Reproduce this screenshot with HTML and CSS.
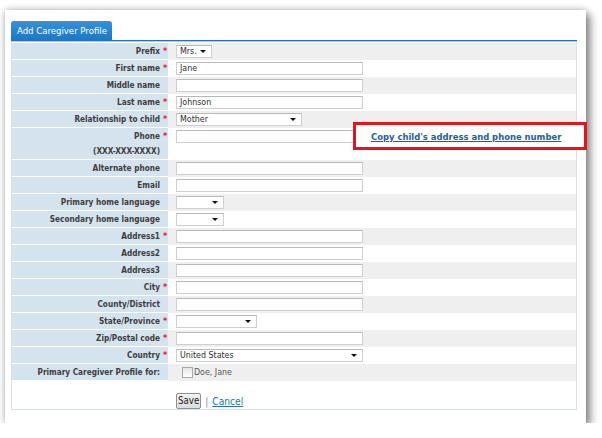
FILE: index.html
```html
<!DOCTYPE html>
<html>
<head>
<meta charset="utf-8">
<link rel="stylesheet" href="styles.css">
</head>
<body>
<div class="page">
  <div class="card">
    <div class="frame">
      <div class="tabs"><div class="tab">Add Caregiver Profile</div></div>
      <div class="tabline"></div>
      <div class="body">
        <div class="form">
          <div class="row"><div class="label">Prefix<span class="req">*</span></div><div class="field"><span class="select w-prefix">Mrs.</span></div></div>
          <div class="row"><div class="label">First name<span class="req">*</span></div><div class="field"><span class="input">Jane</span></div></div>
          <div class="row"><div class="label">Middle name<span class="req"></span></div><div class="field"><span class="input"></span></div></div>
          <div class="row"><div class="label">Last name<span class="req">*</span></div><div class="field"><span class="input">Johnson</span></div></div>
          <div class="row"><div class="label">Relationship to child<span class="req">*</span></div><div class="field"><span class="select w-rel">Mother</span></div></div>
          <div class="row tall"><div class="label"><div class="line">Phone<span class="req">*</span></div><div class="line">(XXX-XXX-XXXX)<span class="req"></span></div></div><div class="field"><span class="input"></span></div></div>
          <div class="row"><div class="label">Alternate phone<span class="req"></span></div><div class="field"><span class="input"></span></div></div>
          <div class="row"><div class="label">Email<span class="req"></span></div><div class="field"><span class="input"></span></div></div>
          <div class="row"><div class="label">Primary home language<span class="req"></span></div><div class="field"><span class="select w-lang"></span></div></div>
          <div class="row"><div class="label">Secondary home language<span class="req"></span></div><div class="field"><span class="select w-lang"></span></div></div>
          <div class="row"><div class="label">Address1<span class="req">*</span></div><div class="field"><span class="input"></span></div></div>
          <div class="row"><div class="label">Address2<span class="req"></span></div><div class="field"><span class="input"></span></div></div>
          <div class="row"><div class="label">Address3<span class="req"></span></div><div class="field"><span class="input"></span></div></div>
          <div class="row"><div class="label">City<span class="req">*</span></div><div class="field"><span class="input"></span></div></div>
          <div class="row"><div class="label">County/District<span class="req"></span></div><div class="field"><span class="input"></span></div></div>
          <div class="row"><div class="label">State/Province<span class="req">*</span></div><div class="field"><span class="select w-state"></span></div></div>
          <div class="row"><div class="label">Zip/Postal code<span class="req">*</span></div><div class="field"><span class="input"></span></div></div>
          <div class="row"><div class="label">Country<span class="req">*</span></div><div class="field"><span class="select w-country">United States</span></div></div>
          <div class="row"><div class="label">Primary Caregiver Profile for:<span class="req"></span></div><div class="field"><label class="check"><span class="box"></span>Doe, Jane</label></div></div>
        </div>
        <div class="actions">
          <span class="btn">Save</span>
          <span class="sep">|</span>
          <a class="cancel" href="#">Cancel</a>
        </div>
      </div>
    </div>
    <div class="callout"><a href="#">Copy child's address and phone number</a></div>
  </div>
</div>
</body>
</html>
```

FILE: styles.css
```css
html, body {
  margin: 0;
  padding: 0;
  background: #ffffff;
}

body {
  font-family: "DejaVu Sans Condensed", "DejaVu Sans", sans-serif;
  color: #3c3c3c;
}

.page {
  padding: 10px 0 0 5px;
}

.card {
  position: relative;
  width: 581px;
  height: 413px;
  background: #ffffff;
  box-shadow: 0 0 7px rgba(0, 0, 0, 0.30), 5px 5px 8px rgba(0, 0, 0, 0.38);
  overflow: visible;
}

.frame {
  margin: 0 9px 0 6px;
  padding-top: 11px;
}

.tabs {
  display: flex;
  height: 19px;
}

.tab {
  width: 101px;
  box-sizing: border-box;
  background: linear-gradient(#3592d8, #1a78c6);
  border-radius: 3px 3px 0 0;
  color: #ffffff;
  font-size: 9.5px;
  line-height: 20px;
  padding-left: 6px;
  white-space: nowrap;
}

.tabline {
  height: 1px;
  background: #2b71b3;
  border-bottom: 1px solid #a8cde9;
}

.body {
  border: 1px solid #d9e3e7;
  border-top: none;
  height: 368px;
  box-sizing: border-box;
  padding-top: 1px;
}

.form {
  display: flex;
  flex-direction: column;
}

.row {
  display: grid;
  grid-template-columns: 156px 1fr;
  height: 17px;
}

.row.tall {
  height: 32px;
}

.row:nth-child(odd) .field {
  background: #efefef;
}

.label {
  background: #d5e3ee;
  border-bottom: 1px solid #ffffff;
  box-sizing: border-box;
  text-align: right;
  font-weight: bold;
  font-size: 8.2px;
  line-height: 16px;
  color: #3d3d3d;
  white-space: nowrap;
}

.row.tall .label {
  padding-top: 1px;
  line-height: 15px;
}

.req {
  display: inline-block;
  width: 8px;
  padding-left: 3px;
  box-sizing: border-box;
  text-align: left;
  color: #e2202c;
  font-size: 9px;
}

.field {
  padding-left: 8px;
  padding-top: 2px;
  box-sizing: border-box;
  font-size: 8.8px;
  color: #2e2e2e;
}

.input,
.select {
  display: block;
  position: relative;
  height: 13px;
  box-sizing: border-box;
  border: 1px solid #cfcfcf;
  border-top-color: #b9b9b9;
  background: #ffffff;
  padding-left: 3px;
  line-height: 11px;
  white-space: nowrap;
}

.input {
  width: 187px;
}

.select::after {
  content: "";
  position: absolute;
  right: 5px;
  top: 4px;
  border-left: 3px solid transparent;
  border-right: 3px solid transparent;
  border-top: 3px solid #111111;
}

.w-prefix { width: 36px; }
.w-rel { width: 126px; }
.w-lang { width: 48px; }
.w-state { width: 81px; }
.w-country { width: 187px; }

.check {
  display: flex;
  align-items: center;
  padding-left: 6px;
  color: #555555;
  font-size: 8.8px;
  line-height: 13px;
}

.box {
  width: 9px;
  height: 9px;
  border: 1px solid #a8a8a8;
  background: linear-gradient(#e6e6e6, #ffffff);
  margin-right: 1px;
}

.actions {
  display: flex;
  align-items: center;
  margin-top: 12px;
  padding-left: 164px;
  gap: 4px;
}

.btn {
  display: inline-block;
  height: 16px;
  box-sizing: border-box;
  padding: 0 1px;
  border: 1px solid #8f8f8f;
  border-radius: 2px;
  background: linear-gradient(#f4f4f4, #dcdcdc);
  font-size: 9.6px;
  line-height: 14px;
  color: #222222;
}

.sep {
  color: #888888;
  font-size: 10px;
}

.cancel {
  color: #2f6fb3;
  font-size: 10.2px;
  text-decoration: underline;
}

.callout {
  position: absolute;
  left: 348px;
  top: 112px;
  width: 234px;
  height: 28px;
  box-sizing: border-box;
  border: 3px solid #e3141d;
  background: #ffffff;
  padding-left: 15px;
  display: flex;
  align-items: center;
}

.callout a {
  color: #1d5f9f;
  font-weight: bold;
  font-size: 9.4px;
  text-decoration: underline;
  white-space: nowrap;
}
```
